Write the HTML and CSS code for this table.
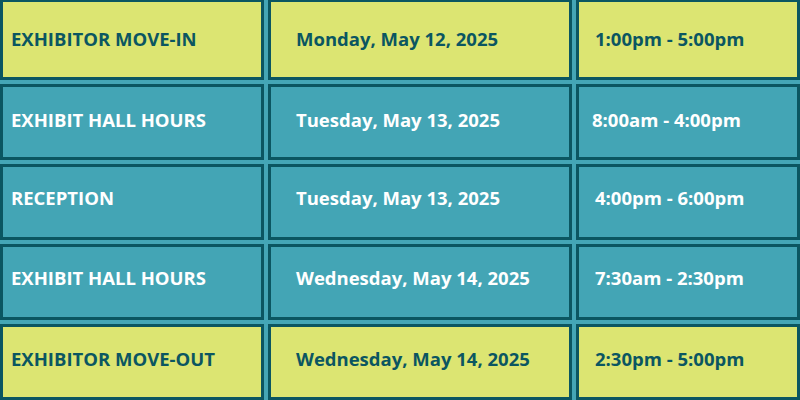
FILE: index.html
```html
<!DOCTYPE html>
<html>
<head>
<meta charset="utf-8">
<link rel="stylesheet" href="styles.css">
</head>
<body>
<div class="schedule">
  <div class="row hi r1">
    <div class="cell event">EXHIBITOR MOVE-IN</div>
    <div class="cell date">Monday, May 12, 2025</div>
    <div class="cell time">1:00pm - 5:00pm</div>
  </div>
  <div class="row r2">
    <div class="cell event">EXHIBIT HALL HOURS</div>
    <div class="cell date">Tuesday, May 13, 2025</div>
    <div class="cell time time-wide">8:00am - 4:00pm</div>
  </div>
  <div class="row r3">
    <div class="cell event">RECEPTION</div>
    <div class="cell date">Tuesday, May 13, 2025</div>
    <div class="cell time">4:00pm - 6:00pm</div>
  </div>
  <div class="row r4">
    <div class="cell event">EXHIBIT HALL HOURS</div>
    <div class="cell date">Wednesday, May 14, 2025</div>
    <div class="cell time">7:30am - 2:30pm</div>
  </div>
  <div class="row hi r5">
    <div class="cell event">EXHIBITOR MOVE-OUT</div>
    <div class="cell date">Wednesday, May 14, 2025</div>
    <div class="cell time">2:30pm - 5:00pm</div>
  </div>
</div>
</body>
</html>
```
FILE: styles.css
```css
html, body {
  margin: 0;
  padding: 0;
  background: #44a6b6;
}
body {
  width: 800px;
  height: 400px;
  overflow: hidden;
  font-family: "Open Sans", "DejaVu Sans", sans-serif;
  font-weight: 700;
  font-size: 18.5px;
}
.schedule {
  display: grid;
  grid-template-columns: 264px 304px 224px;
  grid-template-rows: 80px repeat(4, 76px);
  column-gap: 4px;
  row-gap: 4px;
}
.row {
  display: contents;
}
.cell {
  box-sizing: border-box;
  border: 3px solid #0b5661;
  background: #43a5b5;
  color: #ffffff;
  display: flex;
  align-items: center;
  white-space: nowrap;
}
.hi .cell {
  background: #dce572;
  color: #0b5661;
}
.r1 .cell { border-top-width: 2px; padding-bottom: 2px; }
.r2 .cell { padding-bottom: 5px; }
.r3 .cell { padding-bottom: 9px; }
.r4 .cell { padding-bottom: 9px; }
.r5 .cell { padding-bottom: 7px; }
.event { padding-left: 8px; }
.date { padding-left: 25px; }
.time { padding-left: 16px; }
.time.time-wide { padding-left: 13px; }
```
